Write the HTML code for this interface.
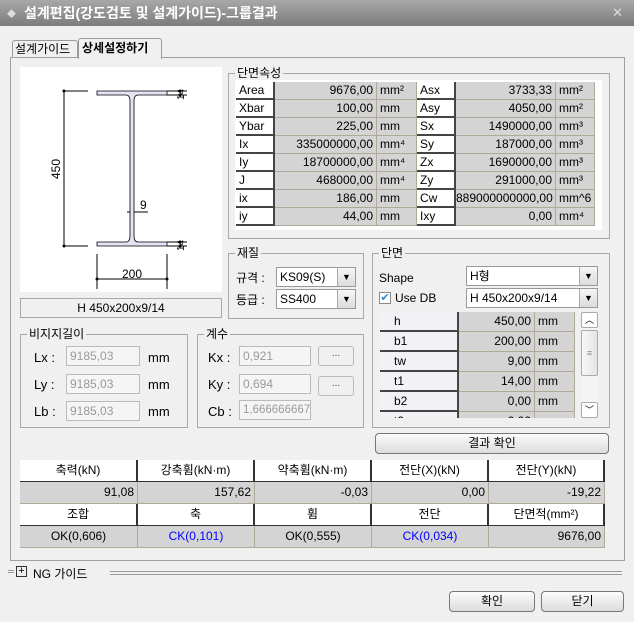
<!DOCTYPE html>
<html><head><meta charset="utf-8"><style>
*{box-sizing:border-box;margin:0;padding:0}
body{width:634px;height:622px;background:#f0f0f0;font-family:"Liberation Sans","Noto Sans CJK KR","NanumGothic",sans-serif;font-size:12px;color:#000;position:relative;overflow:hidden}
.a{position:absolute}
.title{left:0;top:0;width:634px;height:26px;background:linear-gradient(#a8a8a8,#7c7c7c);color:#fff;font-weight:bold;font-size:14px;line-height:26px;padding-left:24px}
.grp{position:absolute;border:1px solid #a8a8a8}
.grp>.lg{position:absolute;top:-9px;left:6px;background:#f0f0f0;padding:0 2px;font-size:12px;line-height:16px}
.c{position:absolute;height:18px;line-height:17px;font-size:12px;white-space:nowrap;overflow:hidden}
.lb{background:#fff;border-right:2px solid #444;border-bottom:2px solid #444;padding-left:3px}
.vl{background:#d4d4d4;text-align:right;padding-right:3px;border-right:1px solid #b0a898;border-bottom:1px solid #b0a898}
.un{background:#d4d4d4;padding-left:3px;border-right:1px solid #b0a898;border-bottom:1px solid #b0a898}
.tb{position:absolute;background:#f5f5f5;border:1px solid #bbb;color:#999;height:20px;line-height:18px;padding-left:3px;font-size:12px}
.cb{position:absolute;background:#fff;border:1px solid #999;height:20px;line-height:18px;padding-left:3px;font-size:12px}
.cb .ar{position:absolute;right:0;top:0;width:18px;height:18px;background:linear-gradient(#f6f6f6,#dcdcdc);border-left:1px solid #aaa;text-align:center;font-size:9px;line-height:18px}
.btn{position:absolute;border:1px solid #777;border-radius:4px;background:linear-gradient(#fcfcfc,#dcdcdc);text-align:center;font-size:12px}
.dots{position:absolute;width:36px;height:20px;border:1px solid #bbb;border-radius:3px;background:#f0f0f0;color:#446;text-align:center;font-size:10px;line-height:14px}
.rh{position:absolute;background:#fff;border-right:2px solid #333;border-bottom:1px solid #333;text-align:center;height:22px;line-height:21px}
.rv{position:absolute;background:#d4d4d4;border-right:1px solid #b0a898;border-bottom:1px solid #b0a898;height:22px;line-height:21px}
</style></head><body>
<div class="a title">설계편집(강도검토 및 설계가이드)-그룹결과</div>
<div class="a" style="left:7px;top:7px;color:#ddd;font-size:9px">◆</div>
<div class="a" style="left:612px;top:5px;color:#ddd;font-size:13px">✕</div>

<div class="a" style="left:12px;top:40px;width:66px;height:18px;border:1px solid #999;border-bottom:none;border-radius:3px 3px 0 0;line-height:16px;padding-left:2px">설계가이드</div>
<div class="a" style="left:78px;top:38px;width:84px;height:21px;border:1px solid #999;border-bottom:none;background:#f0f0f0;border-radius:3px 3px 0 0;font-weight:bold;line-height:19px;padding-left:3px;z-index:2">상세설정하기</div>
<div class="a" style="left:10px;top:57px;width:615px;height:504px;border:1px solid #a0a0a0"></div>

<div class="a" style="left:20px;top:67px;width:202px;height:225px;background:#fff"></div>
<svg class="a" style="left:20px;top:67px" width="202" height="225" font-family="Liberation Sans" font-size="12">
<g stroke="#000" fill="none" stroke-width="1">
<line x1="44" y1="24" x2="68" y2="24"/><line x1="44" y1="179" x2="68" y2="179"/><line x1="44" y1="24" x2="44" y2="179"/>
<line x1="77" y1="187" x2="77" y2="222"/><line x1="147" y1="187" x2="147" y2="222"/><line x1="77" y1="212" x2="147" y2="212"/>
<line x1="147" y1="24" x2="167" y2="24"/><line x1="147" y1="28" x2="167" y2="28"/>
<line x1="147" y1="175" x2="167" y2="175"/><line x1="147" y1="179" x2="167" y2="179"/>
<line x1="107" y1="145" x2="128" y2="145"/>
</g>
<g fill="#000"><circle cx="44" cy="24" r="1.5"/><circle cx="44" cy="179" r="1.5"/><circle cx="77" cy="212" r="1.5"/><circle cx="147" cy="212" r="1.5"/><circle cx="160" cy="24" r="1.5"/><circle cx="160" cy="28" r="1.5"/><circle cx="160" cy="175" r="1.5"/><circle cx="160" cy="179" r="1.5"/></g>
<path d="M77 24H147V28H118Q114 28 114 34V169Q114 175 118 175H147V179H77V175H106Q110 175 110 169V34Q110 28 106 28H77Z" fill="#e4e4f4" stroke="#000" stroke-width="0.8"/>
<text x="120" y="142">9</text>
<text x="102" y="211">200</text>
<text transform="translate(40,112) rotate(-90)">450</text>
<text transform="translate(164,33) rotate(-90)" font-size="10">14</text>
<text transform="translate(164,184) rotate(-90)" font-size="10">14</text>
</svg>
<div class="a" style="left:20px;top:298px;width:202px;height:20px;border:1px solid #a8a8a8;text-align:center;line-height:18px">H 450x200x9/14</div>

<div class="grp" style="left:228px;top:73px;width:382px;height:166px"><span class="lg">단면속성</span></div>
<div class="a" style="left:235px;top:80px;width:367px;height:150px;background:#fff"></div>
<div id="props"></div>

<div class="grp" style="left:228px;top:253px;width:136px;height:66px"><span class="lg">재질</span></div>
<div class="a" style="left:236px;top:269px">규격 :</div>
<div class="a" style="left:236px;top:291px">등급 :</div>
<div class="cb" style="left:276px;top:267px;width:80px">KS09(S)<span class="ar">▼</span></div>
<div class="cb" style="left:276px;top:289px;width:80px">SS400<span class="ar">▼</span></div>

<div class="grp" style="left:372px;top:253px;width:238px;height:175px"><span class="lg">단면</span></div>
<div class="a" style="left:379px;top:271px">Shape</div>
<div class="a" style="left:379px;top:292px;width:12px;height:12px;border:1px solid #888;background:#fff;color:#2a8ad8;font-size:11px;line-height:10px;text-align:center">✔</div>
<div class="a" style="left:395px;top:291px">Use DB</div>
<div class="cb" style="left:466px;top:266px;width:132px">H형<span class="ar">▼</span></div>
<div class="cb" style="left:466px;top:288px;width:132px">H 450x200x9/14<span class="ar">▼</span></div>
<div class="a" style="left:380px;top:312px;width:195px;height:106px;overflow:hidden" id="dim"></div>
<div class="a" style="left:581px;top:312px;width:17px;height:106px;background:#f4f4f4">
 <div class="a" style="left:0;top:0;width:17px;height:16px;border:1px solid #aaa;border-radius:2px;font-size:9px;text-align:center;line-height:14px;background:#fff">︿</div>
 <div class="a" style="left:0;top:18px;width:17px;height:46px;border:1px solid #aaa;border-radius:2px;background:linear-gradient(90deg,#f8f8f8,#e4e4e4);text-align:center;line-height:44px;font-size:9px;color:#888">≡</div>
 <div class="a" style="left:0;top:90px;width:17px;height:16px;border:1px solid #aaa;border-radius:2px;font-size:9px;text-align:center;line-height:14px;background:#fff">﹀</div>
</div>
<div class="btn" style="left:375px;top:433px;width:234px;height:21px;line-height:19px">결과 확인</div>

<div class="grp" style="left:20px;top:334px;width:168px;height:94px"><span class="lg">비지지길이</span></div>
<div class="tb" style="left:66px;top:346px;width:74px">9185,03</div>
<div class="tb" style="left:66px;top:374px;width:74px">9185,03</div>
<div class="tb" style="left:66px;top:401px;width:74px">9185,03</div>
<div class="a" style="left:34px;top:350px;font-size:13px">Lx :</div>
<div class="a" style="left:34px;top:377px;font-size:13px">Ly :</div>
<div class="a" style="left:34px;top:404px;font-size:13px">Lb :</div>
<div class="a" style="left:148px;top:350px;font-size:13px">mm</div>
<div class="a" style="left:148px;top:377px;font-size:13px">mm</div>
<div class="a" style="left:148px;top:404px;font-size:13px">mm</div>

<div class="grp" style="left:197px;top:334px;width:167px;height:94px"><span class="lg">계수</span></div>
<div class="a" style="left:208px;top:350px;font-size:13px">Kx :</div>
<div class="a" style="left:208px;top:377px;font-size:13px">Ky :</div>
<div class="a" style="left:208px;top:404px;font-size:13px">Cb :</div>
<div class="tb" style="left:239px;top:346px;width:72px">0,921</div>
<div class="tb" style="left:239px;top:374px;width:72px">0,694</div>
<div class="tb" style="left:239px;top:400px;width:72px;font-size:11.5px">1,666666667</div>
<div class="dots" style="left:318px;top:346px">...</div>
<div class="dots" style="left:318px;top:376px">...</div>

<div id="res"></div>

<div class="a" style="left:8px;top:570px;width:6px;border-top:1px solid #999;height:3px;border-bottom:1px solid #999"></div>
<div class="a" style="left:16px;top:566px;width:11px;height:11px;border:1px solid #333;font-size:11px;line-height:8px;text-align:center">+</div>
<div class="a" style="left:33px;top:565px;font-size:12px">NG 가이드</div>
<div class="a" style="left:110px;top:571px;width:512px;height:4px;border-top:1px solid #999;border-bottom:1px solid #999"></div>

<div class="btn" style="left:449px;top:591px;width:86px;height:21px;line-height:19px">확인</div>
<div class="btn" style="left:541px;top:591px;width:83px;height:21px;line-height:19px">닫기</div>

<script>
var P=[["Area","9676,00","mm²","Asx","3733,33","mm²"],["Xbar","100,00","mm","Asy","4050,00","mm²"],["Ybar","225,00","mm","Sx","1490000,00","mm³"],["Ix","335000000,00","mm⁴","Sy","187000,00","mm³"],["Iy","18700000,00","mm⁴","Zx","1690000,00","mm³"],["J","468000,00","mm⁴","Zy","291000,00","mm³"],["ix","186,00","mm","Cw","889000000000,00","mm^6"],["iy","44,00","mm","Ixy","0,00","mm⁴"]];
var h="",X=[236,275,377,417,456,556,595];
P.forEach(function(r,i){var y=82+i*18;var cls=["lb","vl","un","lb","vl","un"];
for(var j=0;j<6;j++)h+='<div class="c '+cls[j]+'" style="left:'+X[j]+'px;top:'+y+'px;width:'+(X[j+1]-X[j])+'px">'+r[j]+'</div>';});
document.getElementById("props").innerHTML=h;
var D=[["h","450,00"],["b1","200,00"],["tw","9,00"],["t1","14,00"],["b2","0,00"],["t2","0,00"]];h="";
D.forEach(function(r,i){var y=i*20;h+='<div class="c lb" style="left:0;top:'+y+'px;width:79px;height:20px;line-height:19px;padding-left:14px;background:#f2f2f6">'+r[0]+'</div><div class="c vl" style="left:79px;top:'+y+'px;width:76px;height:20px;line-height:19px">'+r[1]+'</div><div class="c un" style="left:155px;top:'+y+'px;width:40px;height:20px;line-height:19px">mm</div>';});
document.getElementById("dim").innerHTML=h;
var C=[20,138,255,372,489,605];
var R=[["축력(kN)","강축휨(kN·m)","약축휨(kN·m)","전단(X)(kN)","전단(Y)(kN)"],["91,08","157,62","-0,03","0,00","-19,22"],["조합","축","휨","전단","단면적(mm²)"],["OK(0,606)","CK(0,101)","OK(0,555)","CK(0,034)","9676,00"]];h="";
R.forEach(function(r,i){var y=460+i*22;for(var j=0;j<5;j++){var w=C[j+1]-C[j];
if(i%2==0)h+='<div class="rh" style="left:'+C[j]+'px;top:'+y+'px;width:'+w+'px">'+r[j]+'</div>';
else{var al=(i==1||j==4)?'text-align:right;padding-right:3px':'text-align:center';var col=(i==3&&(j==1||j==3))?'color:#00f;':'';
h+='<div class="rv" style="left:'+C[j]+'px;top:'+y+'px;width:'+w+'px;'+al+';'+col+'">'+r[j]+'</div>';}}});
document.getElementById("res").innerHTML=h;
</script>
</body></html>
